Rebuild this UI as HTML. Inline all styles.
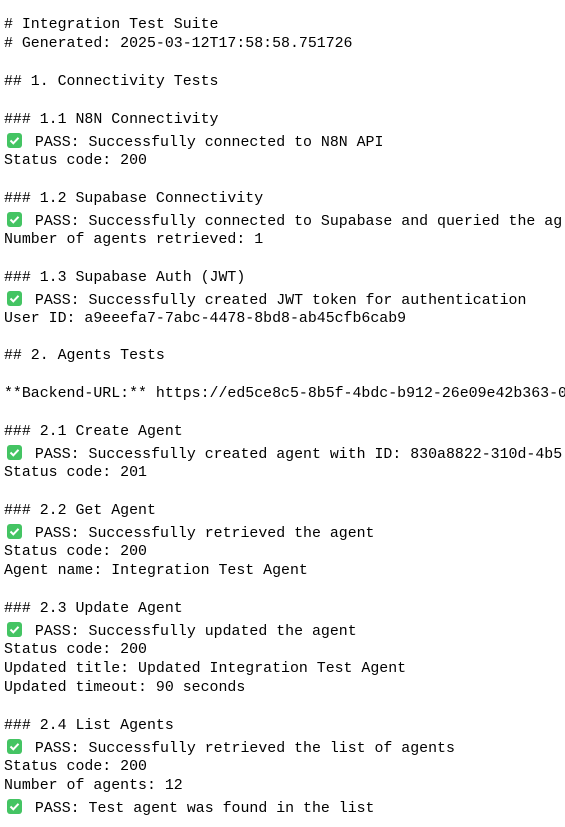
<!DOCTYPE html>
<html><head><meta charset="utf-8"><style>
html,body{margin:0;padding:0;background:#fff;width:565px;height:827px;overflow:hidden}
body{padding-top:16px;padding-left:4px;font-family:"Liberation Mono",monospace;font-size:14.9px;color:#000;white-space:pre;box-sizing:border-box}
.l{height:18.98px;line-height:18.98px;overflow:hidden}
.e{height:21.98px;line-height:18.98px;padding-top:3px;box-sizing:border-box;overflow:hidden}
.ck{display:inline-block;width:22px;height:15px;vertical-align:-2px;position:relative}
.ck i{position:absolute;left:3px;top:0;width:15px;height:15px;background:#44c463;border-radius:3px}
.ck svg{position:absolute;left:3px;top:0}
</style></head><body><div class="l"># Integration Test Suite</div><div class="l"># Generated: 2025-03-12T17:58:58.751726</div><div class="l"> </div><div class="l">## 1. Connectivity Tests</div><div class="l"> </div><div class="l">### 1.1 N8N Connectivity</div><div class="e"><span class="ck"><i></i><svg width="15" height="15"><path d="M3.5 7.5l2.8 2.8 5.2-5.5" fill="none" stroke="#fff" stroke-width="2"/></svg></span> PASS: Successfully connected to N8N API</div><div class="l">Status code: 200</div><div class="l"> </div><div class="l">### 1.2 Supabase Connectivity</div><div class="e"><span class="ck"><i></i><svg width="15" height="15"><path d="M3.5 7.5l2.8 2.8 5.2-5.5" fill="none" stroke="#fff" stroke-width="2"/></svg></span> PASS: Successfully connected to Supabase and queried the ag</div><div class="l">Number of agents retrieved: 1</div><div class="l"> </div><div class="l">### 1.3 Supabase Auth (JWT)</div><div class="e"><span class="ck"><i></i><svg width="15" height="15"><path d="M3.5 7.5l2.8 2.8 5.2-5.5" fill="none" stroke="#fff" stroke-width="2"/></svg></span> PASS: Successfully created JWT token for authentication</div><div class="l">User ID: a9eeefa7-7abc-4478-8bd8-ab45cfb6cab9</div><div class="l"> </div><div class="l">## 2. Agents Tests</div><div class="l"> </div><div class="l">**Backend-URL:** https://ed5ce8c5-8b5f-4bdc-b912-26e09e42b363-0</div><div class="l"> </div><div class="l">### 2.1 Create Agent</div><div class="e"><span class="ck"><i></i><svg width="15" height="15"><path d="M3.5 7.5l2.8 2.8 5.2-5.5" fill="none" stroke="#fff" stroke-width="2"/></svg></span> PASS: Successfully created agent with ID: 830a8822-310d-4b5</div><div class="l">Status code: 201</div><div class="l"> </div><div class="l">### 2.2 Get Agent</div><div class="e"><span class="ck"><i></i><svg width="15" height="15"><path d="M3.5 7.5l2.8 2.8 5.2-5.5" fill="none" stroke="#fff" stroke-width="2"/></svg></span> PASS: Successfully retrieved the agent</div><div class="l">Status code: 200</div><div class="l">Agent name: Integration Test Agent</div><div class="l"> </div><div class="l">### 2.3 Update Agent</div><div class="e"><span class="ck"><i></i><svg width="15" height="15"><path d="M3.5 7.5l2.8 2.8 5.2-5.5" fill="none" stroke="#fff" stroke-width="2"/></svg></span> PASS: Successfully updated the agent</div><div class="l">Status code: 200</div><div class="l">Updated title: Updated Integration Test Agent</div><div class="l">Updated timeout: 90 seconds</div><div class="l"> </div><div class="l">### 2.4 List Agents</div><div class="e"><span class="ck"><i></i><svg width="15" height="15"><path d="M3.5 7.5l2.8 2.8 5.2-5.5" fill="none" stroke="#fff" stroke-width="2"/></svg></span> PASS: Successfully retrieved the list of agents</div><div class="l">Status code: 200</div><div class="l">Number of agents: 12</div><div class="e"><span class="ck"><i></i><svg width="15" height="15"><path d="M3.5 7.5l2.8 2.8 5.2-5.5" fill="none" stroke="#fff" stroke-width="2"/></svg></span> PASS: Test agent was found in the list</div></body></html>
